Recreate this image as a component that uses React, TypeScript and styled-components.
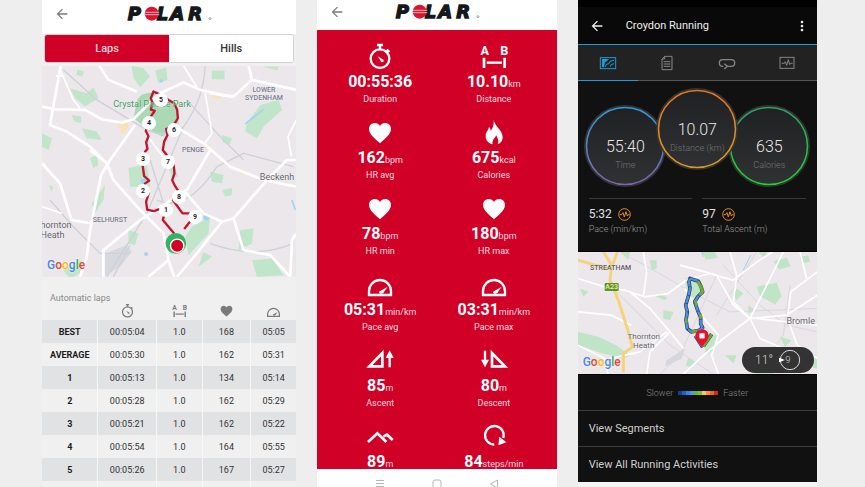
import { FC, ReactNode } from 'react'
import { MdArrowBack, MdMoreVert } from 'react-icons/md'
import styled, { createGlobalStyle, css } from 'styled-components'

const colors = {
	page: '#eeeeee',
	polar: '#d10026',
	blue: '#1e9ad6',
	dark: '#111111',
	grey: '#7b7b7b'
}

const GlobalStyle = createGlobalStyle`
	* {
		box-sizing: border-box;
	}
	body {
		background: ${colors.page};
		font-family: Roboto, 'Liberation Sans', sans-serif;
		margin: 0;
	}
	button {
		background: none;
		border: 0;
		color: inherit;
		cursor: pointer;
		font: inherit;
		padding: 0;
	}
	svg {
		display: block;
	}
`

/* ---------- icons ---------- */

type IconProps = { size?: number }

const Glyph: FC<IconProps & { children: ReactNode }> = ({ size = 28, children }) => (
	<svg
		width={size}
		height={size}
		viewBox='0 0 84 84'
		fill='none'
		stroke='currentColor'
		overflow='visible'
		aria-hidden
	>
		{children}
	</svg>
)

const StopwatchIcon: FC<IconProps> = (props) => (
	<Glyph {...props}>
		<circle cx='42' cy='50' r='28' strokeWidth='7' />
		<path d='M33 9h18M42 9v12M62 23l8 7' strokeWidth='7' />
		<path d='M35 43l17 10c3 5-1 9-6 7z' fill='currentColor' stroke='none' />
	</Glyph>
)

const DistanceIcon: FC<IconProps> = (props) => (
	<Glyph {...props}>
		<g
			fill='currentColor'
			stroke='none'
			fontFamily="'Liberation Sans Narrow', Roboto, sans-serif"
			fontSize='38'
			fontWeight='700'
			textAnchor='middle'
		>
			<text x='14' y='38'>
				A
			</text>
			<text x='73' y='38'>
				B
			</text>
		</g>
		<path d='M12 47v31M74 47v31' strokeWidth='8' />
		<path d='M20 62h46' strokeWidth='7' />
	</Glyph>
)

const HeartIcon: FC<IconProps> = (props) => (
	<Glyph {...props}>
		<path
			d='M42 76C30 64 9 50 9 33c0-11 8-18 17-18 7 0 13 4 16 9 3-5 9-9 16-9 9 0 17 7 17 18 0 17-21 31-33 43z'
			fill='currentColor'
			stroke='none'
		/>
	</Glyph>
)

const FlameIcon: FC<IconProps> = (props) => (
	<Glyph {...props}>
		<path
			d='M41 4c1 20 27 32 27 54 0 11-6 18-15 21 5-10 0-16-4-27-4 9-14 14-11 27-12-3-21-11-21-25 0-12 8-17 10-27 4 3 5 7 5 11 9-9 10-22 9-34z'
			fill='currentColor'
			stroke='none'
		/>
	</Glyph>
)

const PaceIcon: FC<IconProps> = (props) => (
	<Glyph {...props}>
		<path d='M9 75V64c0-19 15-34 33-34s33 15 33 34v11z' strokeWidth='7' />
		<path d='M65 50L52 69c-5 4-14 2-13-4z' fill='currentColor' stroke='none' />
	</Glyph>
)

const AscentIcon: FC<IconProps> = (props) => (
	<Glyph {...props}>
		<path d='M10 61L49 21v40z' strokeWidth='8' />
		<path d='M71 64V28' strokeWidth='7' />
		<path d='M59 36L71 13l12 23z' fill='currentColor' stroke='none' />
	</Glyph>
)

const DescentIcon: FC<IconProps> = (props) => (
	<Glyph {...props}>
		<path d='M36 61V21l39 40z' strokeWidth='8' />
		<path d='M15 14v34' strokeWidth='7' />
		<path d='M3 41l12 23 12-23z' fill='currentColor' stroke='none' />
	</Glyph>
)

const AltitudeIcon: FC<IconProps> = (props) => (
	<Glyph {...props}>
		<path d='M6 60l28-26 27 26M52 44l11-6 17 16' strokeWidth='8' />
	</Glyph>
)

const CadenceIcon: FC<IconProps> = (props) => (
	<Glyph {...props}>
		<path d='M43 68a28 28 0 1 1 27-20' strokeWidth='7' />
		<path d='M55 70l3-26 21 17z' fill='currentColor' stroke='none' />
	</Glyph>
)

const TabGlyph: FC<{ children: ReactNode }> = ({ children }) => (
	<svg width='18' height='16' viewBox='0 0 54 48' fill='none' stroke='currentColor' strokeWidth='3' aria-hidden>
		{children}
	</svg>
)

const PulseBadge = () => (
	<svg width='13' height='13' viewBox='0 0 39 39' fill='none' stroke='#e08a25' strokeWidth='3' aria-hidden>
		<circle cx='19.5' cy='19.5' r='17.5' />
		<path d='M5 20h6l4-6 4 13 5-16 4 13 3-4h4' />
	</svg>
)

const PolarLogo = () => (
	<svg width='84' height='22' viewBox='0 -10 252 66' overflow='visible' role='img' aria-label='Polar'>
		<g
			fill='#15181b'
			stroke='#15181b'
			strokeWidth='4'
			fontFamily="'DejaVu Sans', sans-serif"
			fontSize='54'
			fontStyle='italic'
			fontWeight='700'
		>
			<text x='2' y='41'>
				P
			</text>
			<text x='89' y='41'>
				L
			</text>
			<text x='130' y='41'>
				A
			</text>
			<text x='184' y='41'>
				R
			</text>
		</g>
		<circle cx='74' cy='22' r='21' fill='#dd1430' />
		<path d='M51 18h46M51 25h46' stroke='#fff' strokeWidth='2' />
		<circle cx='249' cy='37' r='3' fill='none' stroke='#777' strokeWidth='2' />
	</svg>
)

/* ---------- data ---------- */

const laps = [
	['BEST', '00:05:04', '1.0', '168', '05:05'],
	['AVERAGE', '00:05:30', '1.0', '162', '05:31'],
	['1', '00:05:13', '1.0', '134', '05:14'],
	['2', '00:05:28', '1.0', '162', '05:29'],
	['3', '00:05:21', '1.0', '162', '05:22'],
	['4', '00:05:54', '1.0', '164', '05:55'],
	['5', '00:05:26', '1.0', '167', '05:27'],
	['', '', '', '', '']
]

const metrics = [
	{ icon: <StopwatchIcon />, value: '00:55:36', unit: '', label: 'Duration' },
	{ icon: <DistanceIcon />, value: '10.10', unit: 'km', label: 'Distance' },
	{ icon: <HeartIcon />, value: '162', unit: 'bpm', label: 'HR avg' },
	{ icon: <FlameIcon />, value: '675', unit: 'kcal', label: 'Calories' },
	{ icon: <HeartIcon />, value: '78', unit: 'bpm', label: 'HR min' },
	{ icon: <HeartIcon />, value: '180', unit: 'bpm', label: 'HR max' },
	{ icon: <PaceIcon />, value: '05:31', unit: 'min/km', label: 'Pace avg' },
	{ icon: <PaceIcon />, value: '03:31', unit: 'min/km', label: 'Pace max' },
	{ icon: <AscentIcon />, value: '85', unit: 'm', label: 'Ascent' },
	{ icon: <DescentIcon />, value: '80', unit: 'm', label: 'Descent' },
	{ icon: <AltitudeIcon />, value: '89', unit: 'm', label: '' },
	{ icon: <CadenceIcon />, value: '84', unit: 'steps/min', label: '' }
]

// lap markers, in map units
const pins = [
	{ lap: 1, x: 124, y: 144 },
	{ lap: 2, x: 101, y: 125 },
	{ lap: 3, x: 101, y: 93 },
	{ lap: 4, x: 107, y: 57 },
	{ lap: 5, x: 119, y: 34 },
	{ lap: 6, x: 132, y: 64 },
	{ lap: 7, x: 126, y: 96 },
	{ lap: 8, x: 137, y: 131 },
	{ lap: 9, x: 153, y: 151 }
]

const paceScale = ['#12408f', '#1f62c4', '#3384e0', '#4d9bea', '#6db52c', '#7cc22e', '#f0c95a', '#f0962c', '#e96a1c', '#cf2a1c']

const speedRoute =
	'M398 306l-22-34M360 100l25 8 8 16 5 16-14 14-10 16 10 28 8 18v20l6 12-12 8-22 4-12-10-4-26 4-24-5-20 9-30 4-20-3-20z'

/* ---------- maps ---------- */

const Google = () => (
	<GoogleMark>
		<Tint $color='#4285f4'>G</Tint>
		<Tint $color='#ea4335'>o</Tint>
		<Tint $color='#fbbc05'>o</Tint>
		<Tint $color='#4285f4'>g</Tint>
		<Tint $color='#34a853'>l</Tint>
		<Tint $color='#ea4335'>e</Tint>
	</GoogleMark>
)

const LapsMap = () => (
	<MapFrame $height={211}>
		<MapArt viewBox='36 198 762 633' preserveAspectRatio='xMidYMid slice' aria-hidden>
			<rect x='0' y='150' width='860' height='730' fill='#ece7eb' />
			<g fill='#c1e5c8'>
				<path d='M322 298q13-22 53-20l45 22 23 40 3 45-51 25-45-25-40-30z' fill='#abd9b6' />
				<path d='M305 198l35 7 20 25-30 32-20-27zM375 212l33-8 4 36-27 10zM120 265l50 15 20-18 15 33-40 25-30-25zM142 210l20 5-5 15-18-5zM545 212h38v26h-38zM700 200h45l-5 12zM125 345l28 5v20l-20-5zM155 385l45 10 15 25-45-5zM36 400l30 15-10 35-20-10zM690 315l55-15 10 30-55 50-20 35-35-20 5-25zM575 405l30 10-8 20-20-10z' />
				<path d='M185 610l40-55-5 45-25 40zM295 505l55-15 10 70h-60zM180 475l20-10 5 30-15 10zM485 680l55-30-5 50-60 65-10-55zM630 690l40-5-5 45-40 20zM665 780l60-5 35 50-80 5zM505 800l15-45 25 15zM100 810l55-30-5 40-30 15zM295 690l30 10-10 35-20-5zM540 515l40 10-5 25-30-5zM55 555l15 5-5 15zM415 500l20 5 10 25-20 0zM575 570l30-5 0 20-20 5z' />
			</g>
			<g fill='#a3d2f5'>
				<path d='M330 540l15-5 10 15-17 5z' />
				<circle cx='528' cy='652' r='9' />
				<circle cx='348' cy='762' r='6' />
				<circle cx='407' cy='398' r='6' />
				<circle cx='393' cy='243' r='5' />
			</g>
			<path d='M645 372l55-44M785 600l10 30' stroke='#a3d2f5' strokeWidth='5' />
			<path d='M225 760l65-25 15 20-35 45-50 30z' fill='#d7d9df' />
			<g fill='none' stroke='#cdd1d8' strokeWidth='4'>
				<path d='M100 210l100 90 150 90q70 30 110-10 60-80 65-182M460 380L350 640l-50 80-50 80M380 600q90 40 180-100l80-40 150 40M60 600l70 80 80 80h90M470 300l100 110 70 70M540 730q130 50 250 0M360 480l40 130M230 830l60-95M250 830l50-95' />
			</g>
			<g fill='#f9e3b4'>
				<path d='M262 368l32-6 2 22-22 20zM540 275l32 10-5 14-22-8zM515 430l25 5-10 15zM628 512l18 4-12 8z' />
			</g>
			<g fill='none' stroke='#fff' strokeWidth='8' strokeLinejoin='round'>
				<path d='M36 320l39 8 90 2 50 28 60 10 35-10 75-76 75-34 50 22 65 15 35 5' />
				<path d='M92 198L60 375l50 20 70 45 50 50M208 198l27 42 85 35M315 375l-75 105-27 45-33 165-10 80-20 60' />
				<path d='M180 450l50 40 20 50 80 90 70 70 15 80 20 60M445 385l75 45 80 70 100 40 98 20' />
				<path d='M655 198l10 42 133 30M665 240l-55 50-70-10M220 830v-80l110-90 140-90 70-120M36 490l54 60 35 110 60 10' />
				<path d='M460 570l60 70 55 25 35-10 100-115 60-60h40M575 665l-75 95-60 70M610 655l30 95 80 15 60 65M415 780l-60 50M780 830l5-110 13-20' />
			</g>
			<g fill='none' stroke='#fff' strokeWidth='5'>
				<path d='M88 205l42 95 20 25M78 228h25M460 198l40 64M525 280l20 120-25 35M798 360l-25 50 10 60M350 405l60 80M36 620l60 20' />
			</g>
			<g fill='none' stroke='#bf1530' strokeWidth='7' strokeLinejoin='round'>
				<path d='M432 700l-34-40 9-32-22 0-14 5-20-4-3-24 8-26-16-6 5-23 12-8-15-14-4-28v-22l7-23 7-8-4-20 7-18-8-16 5-18 6-20 16-22-12-4 5-19-5-15 8-20 22 10 23 15 17 10 9 20 2 25-12 20-23 12 4 18-10 20-4 25 17 22 15 18 3 30-7 20 8 17 13 20-19 23 29 40h23l15-3-8 18-25 32' />
			</g>
			<circle cx='437' cy='730' r='31' fill='#2fb561' />
			<circle cx='441' cy='737' r='20' fill='#d10026' stroke='#fff' strokeWidth='4' />
		</MapArt>
		<MapLabel $x={110} $y={38} $size={9} $color='#3f9a5b'>
			Crystal Palace Park
		</MapLabel>
		<MapLabel $x={222} $y={28} $size={7} $color='#767b8e' $strong>
			LOWER
			<br />
			SYDENHAM
		</MapLabel>
		<MapLabel $x={151} $y={84} $size={7} $color='#767b8e' $strong>
			PENGE
		</MapLabel>
		<MapLabel $x={235} $y={111} $size={9} $color='#5f6368'>
			Beckenh
		</MapLabel>
		<MapLabel $x={68} $y={154} $size={7} $color='#767b8e' $strong>
			SELHURST
		</MapLabel>
		<MapLabel $x={14} $y={164} $size={9} $color='#5f6368' $start>
			hornton
			<br />
			Heath
		</MapLabel>
		{pins.map(({ lap, x, y }) => (
			<Pin key={lap} $x={x} $y={y}>
				{lap}
			</Pin>
		))}
		<Google />
	</MapFrame>
)

const SpeedMap = () => (
	<MapFrame $height={122}>
		<MapArt viewBox='24 20 718 367' preserveAspectRatio='xMidYMid slice' aria-hidden>
			<rect x='0' y='0' width='780' height='420' fill='#ece7eb' />
			<g fill='#bfe4c6'>
				<path d='M24 260l60 15 55 25 40 30-20 10-60-15-75-25zM560 125l60-12 15 40-20 25-45-25zM610 48l40-10 12 25-35 10zM395 20l40 0 8 18-35 5zM345 100l35-5 20 40-20 25-30-10zM262 145l30 12-8 8-25-10zM500 130l20 15-20 20-10-15zM405 270l35 0-10 45-25 15zM280 195l30 5-10 25-20-5zM240 45l20 0 0 25-15 5zM535 180l20 15-20 10zM630 275l35 10-20 20zM560 350l60 0-10 37h-50zM690 35l25-5 5 20-25 5zM565 20l25 0-5 20zM465 330l35 0-10 25zM355 340l20 8-8 20-20-8zM30 130l25 10-15 15zM700 330l42 10v30l-40-10zM150 20l30 0-5 25zM60 340l25 5-10 18z' />
			</g>
			<path d='M520 75l22-45M395 20l5 15' stroke='#9fd0f3' strokeWidth='3' fill='none' />
			<path d='M290 345l55-35-10 30-50 25z' fill='#d5d7dd' />
			<g fill='none' stroke='#d6d8de' strokeWidth='3'>
				<path d='M150 20l110 60 120 70 100 50 262-10M440 90L330 330l-60 57M130 130l170 170 130 87M460 60l110 120 80 60 92 20M560 20l-120 190M660 120l-20 150-60 80' />
			</g>
			<g fill='none' stroke='#fff' strokeWidth='5' strokeLinejoin='round'>
				<path d='M24 100l80 25 60 10 60 20 70-10 55-40 70-20 70 20 80-60 40-25M220 20l10 60-10 75M24 200l100 10 60 30M345 130l40 70 60 70-20 60 20 57' />
				<path d='M440 90l50 90 50 40 110-10 92-60M540 220l-80 60-70 60-50 47M540 220l30 60 70 30 60 77M480 20l20 70-10 80 50 50M640 20l-40 80-60 120M742 80l-80 60-10 80 30 80 60 40M300 260l-60 60-10 67M24 300l80 40 10 47M120 340l90-20 80-60M690 20l20 80M560 220l182 20M330 60l110 30M180 140l60 50 60 70 40 50' />
			</g>
			<g fill='none' stroke='#f4d47a' strokeWidth='9' strokeLinejoin='round'>
				<path d='M100 20l25 40-5 45 25 60 30 95 12 45-27 20v57M24 45l52 15 48 10M142 20l-18 50' />
			</g>
			<g fill='none' strokeLinejoin='round'>
				<path d={speedRoute} stroke='#2f3f58' strokeWidth='11' />
				<path d='M400 303l25-36' stroke='#2f3f58' strokeWidth='11' />
				<path d={speedRoute} stroke='#4a90e2' strokeWidth='7' strokeDasharray='24 2' />
				<path
					d='M400 303l25-36M382 110l10 13 6 15-8 10M392 206v14M375 166l6 14M365 260l16-3M348 220l2 12'
					stroke='#6fae2e'
					strokeWidth='8'
				/>
			</g>
			<path d='M396 308c-4-12-20-20-20-36a20 20 0 0 1 40 0c0 16-16 24-20 36z' fill='#e8102e' />
			<rect x='388' y='264' width='16' height='16' rx='2' fill='#fff' />
		</MapArt>
		<MapLabel $x={33} $y={16} $size={7} $color='#545865' $strong>
			STREATHAM
		</MapLabel>
		<RoadShield $x={34} $y={35}>
			A23
		</RoadShield>
		<MapLabel $x={66} $y={89} $size={8} $color='#5f6368'>
			Thornton
			<br />
			Heath
		</MapLabel>
		<MapLabel $x={223} $y={69} $size={9} $color='#5f6368'>
			Bromle
		</MapLabel>
		<Google />
		<Weather>
			11°
			<svg width='22' height='22' viewBox='0 0 66 66' aria-hidden>
				<circle cx='33' cy='33' r='29' fill='none' stroke='#d8d8d8' strokeWidth='3' />
				<path d='M0 26l18 7-18 7z' fill='#fff' />
				<text x='19' y='43' fontSize='28' fill='#d8d8d8'>
					9
				</text>
			</svg>
		</Weather>
	</MapFrame>
)

/* ---------- screens ---------- */

const LapsScreen = () => (
	<Screen $background='#f0f0f0'>
		<BrandBar $height={34}>
			<BackButton aria-label='Back'>
				<MdArrowBack size={16} />
			</BackButton>
			<PolarLogo />
		</BrandBar>
		<Segments>
			<Segment $active>Laps</Segment>
			<Segment>Hills</Segment>
		</Segments>
		<LapsMap />
		<LapsTitle>Automatic laps</LapsTitle>
		<LapsTable>
			<colgroup>
				<col width='22%' />
				<col width='23%' />
				<col width='18%' />
				<col width='19%' />
				<col width='18%' />
			</colgroup>
			<thead>
				<tr>
					<HeadCell />
					<HeadCell aria-label='Duration'>
						<StopwatchIcon size={15} />
					</HeadCell>
					<HeadCell aria-label='Distance'>
						<DistanceIcon size={15} />
					</HeadCell>
					<HeadCell aria-label='Heart rate'>
						<HeartIcon size={15} />
					</HeadCell>
					<HeadCell aria-label='Pace'>
						<PaceIcon size={15} />
					</HeadCell>
				</tr>
			</thead>
			<tbody>
				{laps.map(([name, ...values], index) => (
					<LapRow key={index}>
						<LapName scope='row'>{name}</LapName>
						{values.map((value, column) => (
							<LapCell key={column}>{value}</LapCell>
						))}
					</LapRow>
				))}
			</tbody>
		</LapsTable>
	</Screen>
)

const SummaryScreen = () => (
	<Screen $background='#ffffff'>
		<BrandBar $height={30}>
			<BackButton aria-label='Back'>
				<MdArrowBack size={16} />
			</BackButton>
			<PolarLogo />
		</BrandBar>
		<Metrics>
			{metrics.map(({ icon, value, unit, label }, index) => (
				<Metric key={index}>
					{icon}
					<MetricValue>
						{value}
						<Unit>{unit}</Unit>
					</MetricValue>
					<MetricLabel>{label}</MetricLabel>
				</Metric>
			))}
		</Metrics>
		<SystemBar>
			<SystemButton aria-label='Recents'>
				<svg width='10' height='10' viewBox='0 0 10 10' fill='none' stroke='currentColor'>
					<path d='M1 1.5h8M1 4.5h8M1 7.5h8' />
				</svg>
			</SystemButton>
			<SystemButton aria-label='Home'>
				<svg width='10' height='10' viewBox='0 0 10 10' fill='none' stroke='currentColor'>
					<rect x='1' y='1' width='8' height='8' rx='2' />
				</svg>
			</SystemButton>
			<SystemButton aria-label='Return'>
				<svg width='10' height='10' viewBox='0 0 10 10' fill='none' stroke='currentColor'>
					<path d='M8.5 1v8l-7-4z' />
				</svg>
			</SystemButton>
		</SystemBar>
	</Screen>
)

type GaugeProps = { id: string; value: string; label: string; from: string; to: string; raised?: boolean }

const Gauge: FC<GaugeProps> = ({ id, value, label, from, to, raised }) => (
	<Dial $raised={raised}>
		<DialArt viewBox='0 0 82 82' aria-hidden>
			<defs>
				<linearGradient id={id} x1='0' y1='0' x2='0' y2='1'>
					<stop offset='0' stopColor={from} />
					<stop offset='1' stopColor={to} />
				</linearGradient>
				<linearGradient id={`${id}-face`} x1='0' y1='0' x2='0' y2='1'>
					<stop offset='0' stopColor='#202122' />
					<stop offset='1' stopColor='#303132' />
				</linearGradient>
			</defs>
			<circle cx='41' cy='41' r='41' fill='#343434' />
			<circle cx='41' cy='41' r='39.5' fill='#1d1d1d' />
			<circle cx='41' cy='41' r='38.5' fill={`url(#${id}-face)`} stroke={`url(#${id})`} strokeWidth='1.6' />
		</DialArt>
		<DialValue>{value}</DialValue>
		<DialLabel>{label}</DialLabel>
	</Dial>
)

const ActivityScreen = () => (
	<Screen $background='#f4f4f4'>
		<StatusBar />
		<AppBar>
			<BackButton aria-label='Back'>
				<MdArrowBack size={16} />
			</BackButton>
			<AppTitle>Croydon Running</AppTitle>
			<BackButton aria-label='More options'>
				<MdMoreVert size={16} />
			</BackButton>
		</AppBar>
		<Tabs>
			<Tab $active aria-label='Overview'>
				<TabGlyph>
					<rect x='4' y='8' width='46' height='33' />
					<path d='M9 12h21l-7 7-5 3-3 15H9z' fill='currentColor' stroke='none' />
					<path d='M45 16l-12 3-3 7-8 2-3 8M45 26l-9 3-2 6' />
				</TabGlyph>
			</Tab>
			<Tab aria-label='Details'>
				<TabGlyph>
					<path d='M20 4h22v40H12V12zM20 4v8h-8' />
					<path d='M17 20h20M17 27h20M17 34h20' />
				</TabGlyph>
			</Tab>
			<Tab aria-label='Laps'>
				<TabGlyph>
					<path d='M16 34h-2a10 10 0 0 1 0-20h26a10 10 0 0 1 0 20H27' strokeWidth='4' />
					<path d='M19 26l9 8-9 8' strokeWidth='4' />
				</TabGlyph>
			</Tab>
			<Tab aria-label='Charts'>
				<TabGlyph>
					<rect x='6' y='7' width='42' height='33' />
					<path d='M11 25h8l3-5 4 11 5-17 4 15 3-4h6' />
				</TabGlyph>
			</Tab>
		</Tabs>
		<Overview>
			<Dials>
				<Gauge id='time' value='55:40' label='Time' from='#2f9ddb' to='#7d65b0' />
				<Gauge id='distance' value='10.07' label='Distance (km)' from='#df7426' to='#dd9a26' raised />
				<Gauge id='calories' value='635' label='Calories' from='#2c9f6c' to='#1fd525' />
			</Dials>
			<Stats>
				<Stat>
					<StatValue>
						5:32 <PulseBadge />
					</StatValue>
					<StatLabel>Pace (min/km)</StatLabel>
				</Stat>
				<Stat>
					<StatValue>
						97 <PulseBadge />
					</StatValue>
					<StatLabel>Total Ascent (m)</StatLabel>
				</Stat>
			</Stats>
		</Overview>
		<SpeedMap />
		<Legend>
			Slower
			<Scale>
				{paceScale.map((color) => (
					<Swatch key={color} $color={color} />
				))}
			</Scale>
			Faster
		</Legend>
		<ActionLink href='#segments'>View Segments</ActionLink>
		<ActionLink href='#activities'>View All Running Activities</ActionLink>
	</Screen>
)

const App = () => (
	<>
		<GlobalStyle />
		<Board>
			<LapsScreen />
			<SummaryScreen />
			<ActivityScreen />
		</Board>
	</>
)

const Board = styled.main`
	display: grid;
	gap: 21px;
	grid-template-columns: 254fr 239fr 239fr;
	height: 100vh;
	overflow: hidden;
	padding: 0 48px 0 42px;
`

const Screen = styled.section<{ $background: string }>`
	background: ${(props) => props.$background};
	display: flex;
	flex-direction: column;
	min-width: 0;
	overflow: hidden;

	& > * {
		flex-shrink: 0;
	}
`

const BrandBar = styled.header<{ $height: number }>`
	align-items: center;
	background: #fff;
	color: ${colors.grey};
	display: grid;
	grid-template-columns: 1fr auto 1fr;
	height: ${(props) => props.$height}px;
	padding: 0 12px 6px;
`

const BackButton = styled.button`
	height: 16px;
	width: 16px;
`

const Segments = styled.nav`
	background: #fff;
	border: 1px solid #d2d2d2;
	border-radius: 3px;
	display: flex;
	height: 29px;
	margin: 0 2px 3px;
	overflow: hidden;
`

const Segment = styled.button<{ $active?: boolean }>`
	background: ${(props) => (props.$active ? colors.polar : '#fff')};
	color: ${(props) => (props.$active ? '#f7d5da' : '#333')};
	flex: 1;
	font-size: 11px;
	font-weight: 500;
`

const MapFrame = styled.div<{ $height: number }>`
	height: ${(props) => props.$height}px;
	overflow: hidden;
	position: relative;
`

const MapArt = styled.svg`
	height: 100%;
	width: 100%;
`

const placed = css<{ $x: number; $y: number }>`
	left: ${(props) => props.$x}px;
	position: absolute;
	top: ${(props) => props.$y}px;
	transform: translate(-50%, -50%);
`

const MapLabel = styled.span<{
	$x: number
	$y: number
	$size: number
	$color: string
	$strong?: boolean
	$start?: boolean
}>`
	${placed};
	color: ${(props) => props.$color};
	font-size: ${(props) => props.$size}px;
	font-weight: ${(props) => (props.$strong ? 500 : 400)};
	line-height: ${(props) => props.$size + 1}px;
	text-align: ${(props) => (props.$start ? 'left' : 'center')};
	text-shadow: 0 0 1px #fff;
	white-space: nowrap;
`

const Pin = styled.span<{ $x: number; $y: number }>`
	${placed};
	background: #fff;
	border-radius: 50%;
	color: #222;
	font-size: 7px;
	font-weight: 700;
	height: 14px;
	line-height: 14px;
	text-align: center;
	width: 14px;
`

const RoadShield = styled.span<{ $x: number; $y: number }>`
	${placed};
	background: #5c9430;
	border-radius: 1px;
	color: #f5ee9e;
	font-size: 7px;
	font-weight: 500;
	line-height: 8px;
	padding: 0 1px;
`

const GoogleMark = styled.span`
	bottom: 4px;
	font-size: 12px;
	font-weight: 500;
	left: 5px;
	line-height: 16px;
	position: absolute;
	text-shadow: 0 0 2px #fff;
`

const Tint = styled.span<{ $color: string }>`
	color: ${(props) => props.$color};
`

const LapsTitle = styled.h2`
	color: #888;
	font-size: 9px;
	font-weight: 400;
	line-height: 10px;
	margin: 16px 8px 0;
`

const LapsTable = styled.table`
	border-collapse: collapse;
	table-layout: fixed;
	width: 100%;
`

const HeadCell = styled.th`
	color: ${colors.grey};
	height: 17px;
	padding: 0;
	vertical-align: top;

	svg {
		margin: 0 auto;
	}
`

const LapRow = styled.tr`
	height: 23px;

	&:nth-child(odd) {
		background: #e1e2e4;
	}
`

const LapName = styled.th`
	color: #1c1c1c;
	font-size: 9px;
	font-weight: 700;
	padding: 0;
`

const LapCell = styled.td`
	border-left: 1px solid #f7f7f7;
	color: #333;
	font-size: 9px;
	font-weight: 400;
	padding: 0;
	text-align: center;
`

const Metrics = styled.div`
	align-content: start;
	background: ${colors.polar};
	color: #fff;
	display: grid;
	flex: 1 1 0;
	grid-auto-rows: 76px;
	grid-template-columns: 1fr 1fr;
	min-height: 0;
	overflow: hidden;
	padding: 0 6px;
`

const Metric = styled.div`
	align-items: center;
	display: flex;
	flex-direction: column;
	padding-top: 12px;
`

const MetricValue = styled.div`
	font-size: 16px;
	font-weight: 700;
	line-height: 20px;
	margin-top: 2px;
`

const Unit = styled.span`
	color: #fbdde2;
	font-size: 9px;
	font-weight: 400;
`

const MetricLabel = styled.div`
	color: #fbdde2;
	font-size: 9px;
	line-height: 10px;
`

const SystemBar = styled.footer`
	align-items: flex-start;
	color: #b5b5b5;
	display: flex;
	gap: 47px;
	height: 18px;
	justify-content: center;
	padding-top: 10px;
`

const SystemButton = styled.button`
	height: 10px;
	width: 10px;
`

const StatusBar = styled.div`
	background: #000;
	height: 7px;
`

const AppBar = styled.header`
	align-items: center;
	background: #090909;
	border-bottom: 1px solid ${colors.blue};
	color: #eee;
	display: flex;
	height: 38px;
	padding: 0 7px 0 11px;
`

const AppTitle = styled.h1`
	flex: 1;
	font-size: 11px;
	font-weight: 400;
	margin: 0 0 0 21px;
`

const Tabs = styled.nav`
	background: #222;
	display: flex;
	height: 36px;
`

const Tab = styled.button<{ $active?: boolean }>`
	align-items: center;
	border-bottom: 1px solid ${(props) => (props.$active ? colors.blue : '#555')};
	color: ${(props) => (props.$active ? colors.blue : '#858585')};
	display: flex;
	flex: 1;
	justify-content: center;
`

const Overview = styled.div`
	background: ${colors.dark};
	border-bottom: 1px solid #000;
	height: 171px;
	padding: 7px 11px 0;
`

const Dials = styled.div`
	align-items: flex-end;
	display: flex;
	height: 99px;
	justify-content: center;
`

const Dial = styled.div<{ $raised?: boolean }>`
	align-items: center;
	display: flex;
	flex-direction: column;
	height: 82px;
	margin: 0 -5px;
	padding-top: 32px;
	position: relative;
	width: 82px;

	${(props) =>
		props.$raised &&
		css`
			align-self: flex-start;
			z-index: 1;
		`}
`

const DialArt = styled.svg`
	inset: 0;
	position: absolute;
`

const DialValue = styled.div`
	color: #e6e6e6;
	font-size: 16px;
	font-weight: 300;
	line-height: 20px;
	position: relative;
`

const DialLabel = styled.div`
	color: #757575;
	font-size: 9px;
	font-weight: 300;
	line-height: 10px;
	margin-top: 3px;
	position: relative;
`

const Stats = styled.div`
	display: grid;
	gap: 10px;
	grid-template-columns: 1fr 1fr;
	margin-top: 11px;
`

const Stat = styled.div`
	border-top: 1px solid #3a3a3a;
	padding-top: 8px;
`

const StatValue = styled.div`
	align-items: center;
	color: #e0e0e0;
	display: flex;
	font-size: 12px;
	gap: 6px;
	line-height: 14px;
`

const StatLabel = styled.div`
	color: #9a9a9a;
	font-size: 9px;
	font-weight: 300;
	line-height: 12px;
	margin-top: 2px;
`

const Weather = styled.div`
	align-items: center;
	background: #333;
	border-radius: 13px;
	bottom: 1px;
	color: #d8d8d8;
	display: flex;
	font-size: 12px;
	font-weight: 300;
	gap: 6px;
	height: 26px;
	justify-content: center;
	position: absolute;
	right: 3px;
	width: 72px;
`

const Legend = styled.div`
	align-items: center;
	background: ${colors.dark};
	border-top: 1px solid #000;
	color: #858585;
	display: flex;
	font-size: 9px;
	font-weight: 300;
	gap: 5px;
	height: 36px;
	justify-content: center;
`

const Scale = styled.div`
	display: flex;
	height: 4px;
`

const Swatch = styled.span<{ $color: string }>`
	background: ${(props) => props.$color};
	width: 4px;
`

const ActionLink = styled.a`
	align-items: center;
	background: ${colors.dark};
	border-top: 1px solid #3c3c3c;
	color: #cfcfcf;
	display: flex;
	font-size: 11px;
	font-weight: 400;
	height: 36px;
	padding: 0 11px;
	text-decoration: none;
`

export default App
